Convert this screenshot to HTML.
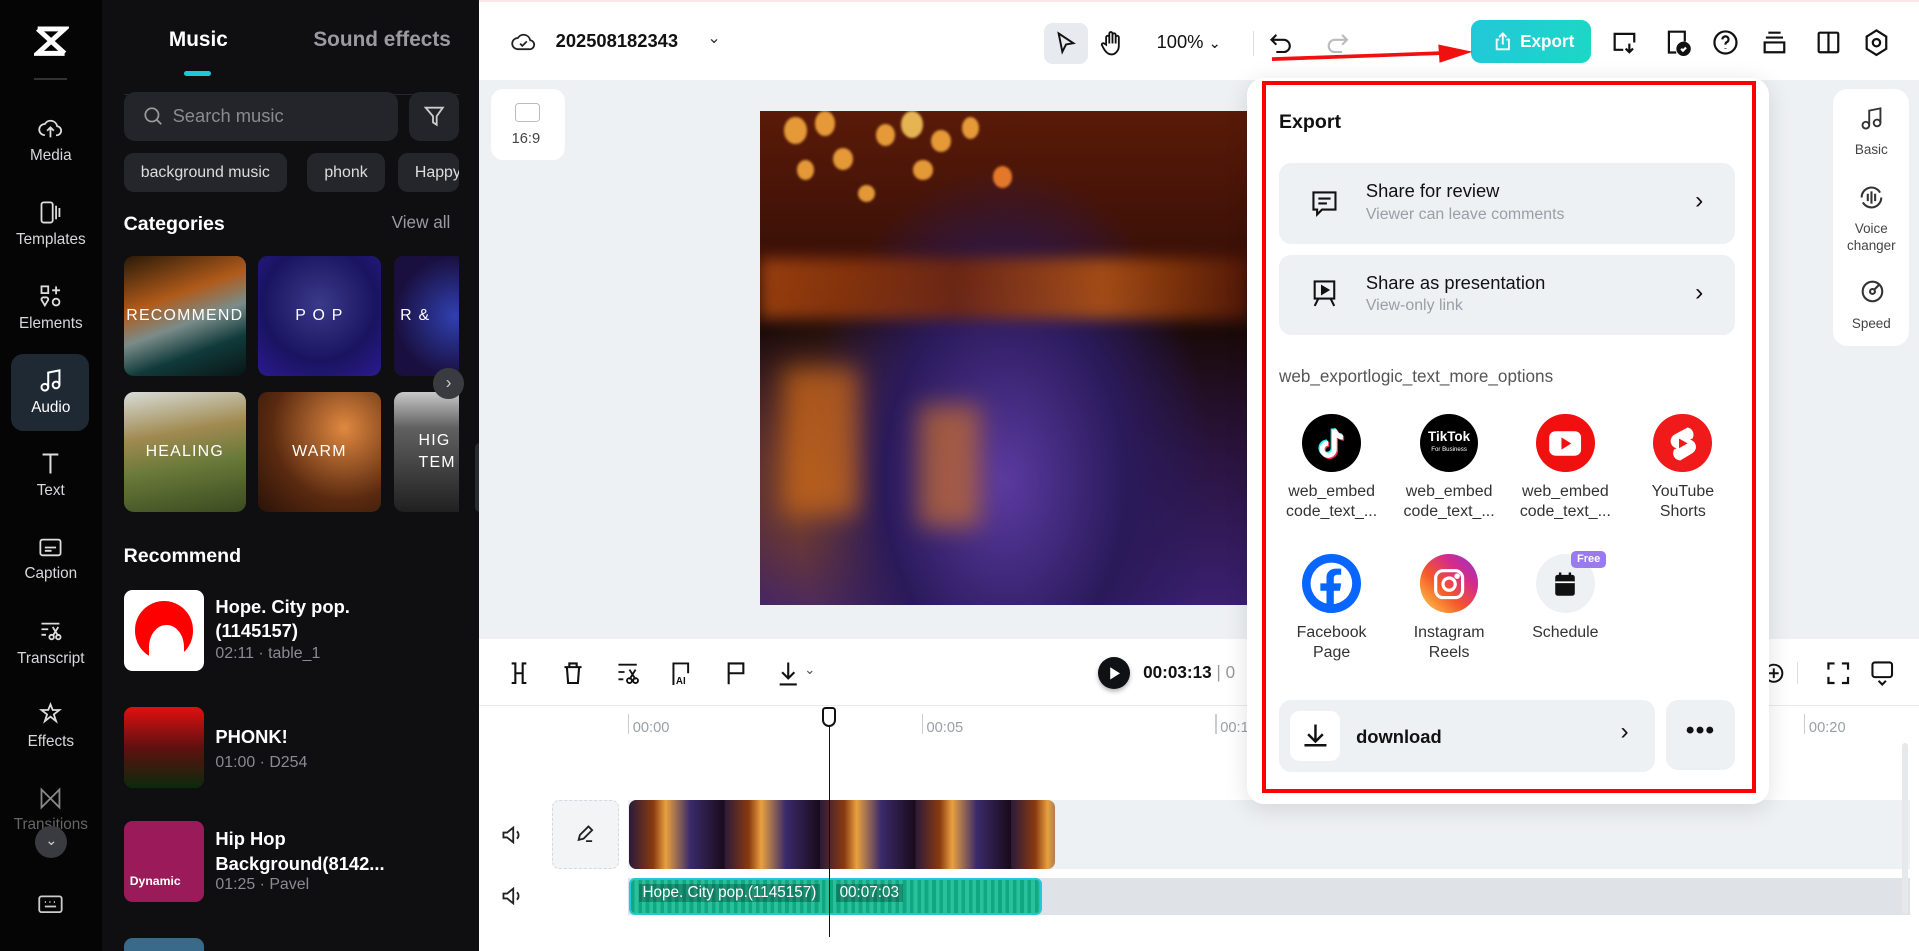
<!DOCTYPE html>
<html><head><meta charset="utf-8"><style>
*{box-sizing:border-box;margin:0;padding:0}
html,body{width:1919px;height:951px;overflow:hidden;background:#fff}
#w{zoom:1.2239;width:1568px;height:777px;position:relative;font-family:"Liberation Sans",sans-serif;overflow:hidden}
.a{position:absolute}
.rail{left:0;top:0;width:83px;height:777px;background:#050505;overflow:hidden}
.ri{position:absolute;left:0;width:83px;text-align:center;color:#d8d8dc;font-size:12.5px}
.ri svg{display:block;margin:0 auto 4px}
.panel{left:83px;top:0;width:308px;height:777px;background:#0f0f12;color:#fff;overflow:hidden}
.chip{position:absolute;top:125px;height:32px;border-radius:8px;background:#25262b;color:#ddd;font-size:13px;line-height:32px;padding:0 14px}
.cat{position:absolute;width:100px;height:98px;border-radius:8px;color:#fff;font-size:13px;display:flex;align-items:center;justify-content:center;letter-spacing:1px;overflow:hidden}
.song{position:absolute;left:18px;width:285px;height:70px}
.song .th{position:absolute;left:0;top:0;width:66px;height:66px;border-radius:7px}
.song .t{position:absolute;left:75px;font-size:15px;font-weight:bold;color:#fff;line-height:20px;width:205px;white-space:nowrap}
.song .s{position:absolute;left:75px;font-size:13px;color:#8a8a90;white-space:nowrap}
.top{left:391px;top:0;width:1177px;height:65px;background:#fff;border-top:2px solid #fbe6ea}
.canvas{left:391px;top:65px;width:1177px;height:457px;background:#eef1f4}
.tl{left:391px;top:522px;width:1177px;height:255px;background:#fff;overflow:hidden}
.pop{left:1019px;top:64px;width:426px;height:593px;background:#fff;border-radius:14px;box-shadow:0 4px 20px rgba(0,0,0,.12)}
.red{left:1031px;top:66px;width:404px;height:582px;border:4px solid #f00}
.card{position:absolute;left:1045px;width:373px;height:66px;background:#eef1f4;border-radius:10px}
.card .t{position:absolute;left:71px;top:14px;font-size:15px;color:#111}
.card .s{position:absolute;left:71px;top:35px;font-size:13px;color:#9a9ea6}
.soc{position:absolute;width:80px;text-align:center;font-size:13px;color:#333;line-height:16px}
.soc .c{width:48px;height:48px;border-radius:50%;margin:0 auto 8px;display:flex;align-items:center;justify-content:center}
.ic{position:absolute}
.bk{position:absolute;border-radius:50%;background:#ffb040;opacity:.85;filter:blur(1px)}
</style></head><body><div id="w">

<div class="a rail">
  <svg class="a" style="left:28px;top:20px" width="28" height="28" viewBox="0 0 28 28" fill="none" stroke="#fff" stroke-width="4"><path d="M3 4h22L3 24h22"/><path d="M3 4l22 20"/></svg>
  <div class="a" style="left:28px;top:64px;width:27px;height:1px;background:#333"></div>
  <div class="ri" style="top:94px"><svg width="22" height="22" viewBox="0 0 24 24" fill="none" stroke="#ddd" stroke-width="1.6"><path d="M7 18a5 5 0 0 1 0-10 6 6 0 0 1 11 2 4 4 0 0 1-1 8M12 20v-8M9 14l3-3 3 3"/></svg>Media</div>
  <div class="ri" style="top:163px"><svg width="22" height="22" viewBox="0 0 24 24" fill="none" stroke="#ddd" stroke-width="1.6"><rect x="4" y="3" width="10" height="18" rx="2"/><path d="M17 6v12M20 8v8"/></svg>Templates</div>
  <div class="ri" style="top:231px"><svg width="22" height="22" viewBox="0 0 24 24" fill="none" stroke="#ddd" stroke-width="1.6"><rect x="4" y="3" width="6" height="6"/><path d="M17 3v7M13.5 6.5h7"/><circle cx="17" cy="17" r="3"/><path d="M4 15l3 5 3-5a2 2 0 0 0-3-2 2 2 0 0 0-3 2z"/></svg>Elements</div>
  <div class="a" style="left:9px;top:289px;width:64px;height:63px;border-radius:10px;background:#1f2933"></div>
  <div class="ri" style="top:300px;color:#fff"><svg width="22" height="22" viewBox="0 0 24 24" fill="none" stroke="#fff" stroke-width="1.8"><circle cx="7" cy="18" r="3"/><circle cx="17" cy="16" r="3"/><path d="M10 18V5l10-2v13"/></svg>Audio</div>
  <div class="ri" style="top:368px"><svg width="22" height="22" viewBox="0 0 24 24" fill="none" stroke="#ddd" stroke-width="1.8"><path d="M5 4h14M12 4v17"/></svg>Text</div>
  <div class="ri" style="top:436px"><svg width="22" height="22" viewBox="0 0 24 24" fill="none" stroke="#ddd" stroke-width="1.6"><rect x="3" y="5" width="18" height="14" rx="2"/><path d="M7 12h10M7 15h6"/></svg>Caption</div>
  <div class="ri" style="top:505px"><svg width="22" height="22" viewBox="0 0 24 24" fill="none" stroke="#ddd" stroke-width="1.6"><path d="M4 5h16M4 10h6M4 15h4"/><circle cx="13" cy="17" r="2"/><circle cx="19" cy="17" r="2"/><path d="M14 8l5 8M19 8l-5 8"/></svg>Transcript</div>
  <div class="ri" style="top:573px"><svg width="22" height="22" viewBox="0 0 24 24" fill="none" stroke="#ddd" stroke-width="1.6"><path d="M12 3l2 5 6 0-5 4 2 6-5-4-5 4 2-6-5-4h6z"/></svg>Effects</div>
  <div class="ri" style="top:641px;color:#666"><svg width="22" height="22" viewBox="0 0 24 24" fill="none" stroke="#888" stroke-width="1.6"><path d="M4 4v16l16-16v16z"/></svg>Transitions</div>
  <div class="a" style="left:29px;top:675px;width:26px;height:26px;border-radius:50%;background:#3a3b40;color:#ccc;font-size:12px;text-align:center;line-height:26px">&#8964;</div>
  <svg class="a" style="left:30px;top:729px" width="22" height="20" viewBox="0 0 24 20" fill="none" stroke="#ccc" stroke-width="1.6"><rect x="2" y="3" width="20" height="14" rx="2"/><path d="M7 8h1M11 8h1M15 8h1M7 12h10"/></svg>
</div>

<div class="a panel">
  <div class="a" style="left:55px;top:23px;font-size:17px;font-weight:bold">Music</div>
  <div class="a" style="left:173px;top:23px;font-size:17px;font-weight:bold;color:#9a9aa0">Sound effects</div>
  <div class="a" style="left:67px;top:58px;width:22px;height:4px;border-radius:2px;background:#1ec8d8"></div>
  <div class="a" style="left:18px;top:77px;width:274px;height:1px;background:#26272b"></div>
  <div class="a" style="left:18px;top:75px;width:224px;height:40px;border-radius:9px;background:#24252a"></div>
  <svg class="a" style="left:33px;top:86px" width="18" height="18" viewBox="0 0 20 20" fill="none" stroke="#999" stroke-width="1.6"><circle cx="9" cy="9" r="6"/><path d="M13.5 13.5l4 4"/></svg>
  <div class="a" style="left:58px;top:86px;font-size:15px;color:#8a8a90">Search music</div>
  <div class="a" style="left:251px;top:75px;width:41px;height:40px;border-radius:9px;background:#24252a"></div>
  <svg class="a" style="left:262px;top:85px" width="20" height="20" viewBox="0 0 20 20" fill="none" stroke="#ccc" stroke-width="1.5"><path d="M3 3h14l-5 7v7l-3-2v-5z"/></svg>
  <div class="chip" style="left:18px">background music</div>
  <div class="chip" style="left:168px">phonk</div>
  <div class="chip" style="left:242px;width:50px;overflow:hidden;padding:0 0 0 14px">Happy</div>
  <div class="a" style="left:18px;top:174px;font-size:16px;font-weight:bold">Categories</div>
  <div class="a" style="left:237px;top:173px;font-size:14px;color:#9a9aa0">View all</div>
  <div style="position:absolute;left:18px;top:209px;width:274px;height:215px;overflow:hidden">
    <div class="cat" style="left:0;top:0;background:linear-gradient(160deg,#2a1a08 0%,#b05a1a 35%,#7a8c8a 55%,#103a3a 75%,#0a1416)">RECOMMEND</div>
    <div class="cat" style="left:110px;top:0;background:radial-gradient(circle at 50% 40%,#3a3a8a,#1a1460 60%,#2a1a90)">P O P</div>
    <div class="cat" style="left:221px;top:0;background:radial-gradient(circle,#3040b0,#1a1040 70%);justify-content:flex-start;padding-left:5px">R &amp;</div>
    <div class="cat" style="left:0;top:111px;background:linear-gradient(170deg,#d8dcd8 0%,#a08a50 35%,#6a7a3a 60%,#3a4a20)">HEALING</div>
    <div class="cat" style="left:110px;top:111px;background:radial-gradient(circle at 70% 30%,#e08840,#5a2a10 60%,#2a1208)">WARM</div>
    <div class="cat" style="left:221px;top:111px;background:linear-gradient(180deg,#c8c8c8 0%,#606060 30%,#202020);justify-content:flex-start;padding-left:20px;line-height:18px">HIG<br>TEM</div>
  </div>
  <div class="a" style="left:271px;top:301px;width:25px;height:25px;border-radius:50%;background:#3a3b40;color:#ccc;text-align:center;line-height:24px;font-size:14px">›</div>
  <div class="a" style="left:18px;top:445px;font-size:16px;font-weight:bold">Recommend</div>
  <div class="song" style="top:482px"><div class="th" style="background:#fff;overflow:hidden"><div style="position:absolute;left:9px;top:9px;width:48px;height:48px;border-radius:50%;background:#f00"></div><div style="position:absolute;left:21px;top:29px;width:28px;height:36px;border-radius:50% 50% 0 0;background:#fff"></div></div><div class="t" style="top:4px">Hope. City pop.<br>(1145157)</div><div class="s" style="top:45px">02:11 · table_1</div></div>
  <div class="song" style="top:578px"><div class="th" style="background:linear-gradient(180deg,#e01010,#601010 50%,#0a2a0a)"></div><div class="t" style="top:14px">PHONK!</div><div class="s" style="top:38px">01:00 · D254</div></div>
  <div class="song" style="top:671px"><div class="th" style="background:#9a1a5a"><span style="position:absolute;left:5px;top:43px;font-size:10px;font-weight:bold">Dynamic</span></div><div class="t" style="top:5px">Hip Hop<br>Background(8142...</div><div class="s" style="top:45px">01:25 · Pavel</div></div>
  <div class="song" style="top:766px"><div class="th" style="background:#3a6a8a"></div></div>
</div>
<div class="a" style="left:388px;top:362px;width:10px;height:56px;border-radius:4px;background:#2a2b30"></div>

<div class="a top">
  <svg class="ic" style="left:26px;top:22px" width="22" height="22" viewBox="0 0 24 24" fill="none" stroke="#222" stroke-width="1.6"><path d="M7 18a5 5 0 0 1 0-10 6 6 0 0 1 11 2 4 4 0 0 1-1 8z"/><path d="M9 13l2 2 4-4"/></svg>
  <div class="a" style="left:63px;top:23px;font-size:15px;font-weight:bold;color:#111">202508182343</div>
  <div class="a" style="left:187px;top:21px;font-size:13px;color:#333">&#8964;</div>
  <div class="a" style="left:462px;top:17px;width:36px;height:34px;border-radius:7px;background:#e7eaee"></div>
  <svg class="ic" style="left:471px;top:24px" width="18" height="20" viewBox="0 0 18 20" fill="none" stroke="#111" stroke-width="1.6"><path d="M3 2l12 8-6 1-3 6z"/></svg>
  <svg class="ic" style="left:508px;top:23px" width="20" height="22" viewBox="0 0 20 22" fill="none" stroke="#111" stroke-width="1.5"><path d="M5 12V6a1.3 1.3 0 0 1 2.6 0v5V3a1.3 1.3 0 0 1 2.6 0v8V4a1.3 1.3 0 0 1 2.6 0v7V6a1.3 1.3 0 0 1 2.6 0v7c0 4-3 7-6 7s-5-2-7-6l-1-2a1.3 1.3 0 0 1 2-1z"/></svg>
  <div class="a" style="left:554px;top:24px;font-size:15px;color:#111">100% <span style="font-size:12px">&#8964;</span></div>
  <div class="a" style="left:633px;top:24px;width:1px;height:20px;background:#ddd"></div>
  <svg class="ic" style="left:646px;top:23px" width="20" height="20" viewBox="0 0 20 20" fill="none" stroke="#111" stroke-width="1.7"><path d="M6 4L2 8l4 4M2 8h10a5 5 0 0 1 0 10H6"/></svg>
  <svg class="ic" style="left:692px;top:23px" width="20" height="20" viewBox="0 0 20 20" fill="none" stroke="#bbb" stroke-width="1.7"><path d="M14 4l4 4-4 4M18 8H8a5 5 0 0 0 0 10h6"/></svg>
  <div class="a" style="left:811px;top:15px;width:98px;height:35px;border-radius:8px;background:linear-gradient(90deg,#22c8d8,#1ed6c6);color:#fff;font-size:14px;font-weight:bold;line-height:35px;padding-left:40px">Export</div>
  <svg class="ic" style="left:829px;top:24px" width="16" height="17" viewBox="0 0 16 17" fill="none" stroke="#fff" stroke-width="1.5"><path d="M5 7H3v8h10V7h-2M8 11V2M5 5l3-3 3 3"/></svg>
  <svg class="ic" style="left:925px;top:22px" width="22" height="22" viewBox="0 0 22 22" fill="none" stroke="#111" stroke-width="1.8"><path d="M10 17H3V4h16v7M15 12v7M12 16l3 3 3-3"/></svg>
  <svg class="ic" style="left:969px;top:21px" width="22" height="24" viewBox="0 0 22 24" fill="none" stroke="#111" stroke-width="1.8"><path d="M10 20H4V3h13v8"/><circle cx="16" cy="17" r="5" fill="#111"/><path d="M14 17l1.5 1.5L18 16" stroke="#fff"/></svg>
  <svg class="ic" style="left:1008px;top:22px" width="22" height="22" viewBox="0 0 22 22" fill="none" stroke="#111" stroke-width="1.8"><circle cx="11" cy="11" r="9"/><path d="M8.5 8.5a2.5 2.5 0 1 1 3.5 2.3c-.8.4-1 1-1 2M11 15.5v.5"/></svg>
  <svg class="ic" style="left:1048px;top:22px" width="22" height="22" viewBox="0 0 22 22" fill="none" stroke="#111" stroke-width="1.8"><path d="M6 3h10M4 7h14M3 11h16v8H3z"/></svg>
  <svg class="ic" style="left:1092px;top:22px" width="22" height="22" viewBox="0 0 22 22" fill="none" stroke="#111" stroke-width="1.8"><rect x="3" y="3" width="16" height="16" rx="1"/><path d="M11 3v16"/></svg>
  <svg class="ic" style="left:1131px;top:21px" width="22" height="24" viewBox="0 0 22 24" fill="none" stroke="#111" stroke-width="1.8"><path d="M11 2l8 5v10l-8 5-8-5V7z"/><circle cx="11" cy="12" r="3"/></svg>
</div>
<svg class="a" style="left:1035px;top:34px" width="170" height="20" viewBox="0 0 170 20"><path d="M4 14L145 9" stroke="#f01010" stroke-width="3"/><path d="M140 2l28 6-27 9z" fill="#f01010"/></svg>

<div class="a canvas">
  <div class="a" style="left:10px;top:8px;width:61px;height:58px;border-radius:10px;background:#fff"></div>
  <div class="a" style="left:30px;top:19px;width:20px;height:16px;border:1.5px solid #bbb;border-radius:3px"></div>
  <div class="a" style="left:27px;top:42px;font-size:12px;color:#444">16:9</div>
  <div class="a" style="left:230px;top:26px;width:400px;height:403px;overflow:hidden;background:radial-gradient(ellipse at 50% 75%,#5a3aa0 0%,#2a1a5a 35%,transparent 60%),radial-gradient(circle at 15% 75%,#8a4a20,transparent 30%),linear-gradient(180deg,#5a1a08 0%,#3a1008 30%,#1a0a0a 45%,#2a1440 70%,#3a2070)">
    <div class="bk" style="left:20px;top:5px;width:18px;height:22px"></div>
    <div class="bk" style="left:45px;top:0;width:16px;height:20px"></div>
    <div class="bk" style="left:30px;top:40px;width:14px;height:16px"></div>
    <div class="bk" style="left:60px;top:30px;width:16px;height:18px"></div>
    <div class="bk" style="left:95px;top:10px;width:15px;height:18px"></div>
    <div class="bk" style="left:115px;top:0;width:18px;height:22px;background:#ffd060"></div>
    <div class="bk" style="left:140px;top:15px;width:16px;height:18px"></div>
    <div class="bk" style="left:125px;top:40px;width:16px;height:16px"></div>
    <div class="bk" style="left:165px;top:5px;width:14px;height:18px"></div>
    <div class="bk" style="left:190px;top:45px;width:16px;height:18px;background:#ff8a30"></div>
    <div class="bk" style="left:80px;top:60px;width:14px;height:14px"></div>
    <div class="a" style="left:0;top:120px;width:400px;height:50px;background:linear-gradient(90deg,#b04a10,#7a2a08 40%,#c05a10 70%,#5a1a08);filter:blur(6px);opacity:.8"></div>
    <div class="a" style="left:20px;top:210px;width:60px;height:120px;background:#d06a18;filter:blur(10px);opacity:.7"></div>
    <div class="a" style="left:130px;top:240px;width:50px;height:100px;background:#e07a20;filter:blur(10px);opacity:.6"></div>
  </div>
  <div class="a" style="left:1107px;top:8px;width:62px;height:210px;border-radius:12px;background:#fff"></div>
  <svg class="ic" style="left:1127px;top:21px" width="22" height="22" viewBox="0 0 24 24" fill="none" stroke="#333" stroke-width="1.7"><circle cx="7" cy="18" r="3"/><circle cx="17" cy="16" r="3"/><path d="M10 18V5l10-2v13"/></svg>
  <div class="a" style="left:1107px;top:51px;width:62px;text-align:center;font-size:11px;color:#444">Basic</div>
  <svg class="ic" style="left:1127px;top:85px" width="22" height="22" viewBox="0 0 22 22" fill="none" stroke="#333" stroke-width="1.7"><path d="M3 11a8 8 0 0 1 15-4M19 11a8 8 0 0 1-15 4M8 8v6M11 6v10M14 8v6"/></svg>
  <div class="a" style="left:1107px;top:115px;width:62px;text-align:center;font-size:11px;color:#444;line-height:14px">Voice<br>changer</div>
  <svg class="ic" style="left:1128px;top:162px" width="22" height="22" viewBox="0 0 22 22" fill="none" stroke="#333" stroke-width="1.7"><circle cx="11" cy="11" r="8"/><circle cx="11" cy="11" r="2"/><path d="M12.5 9.5l4-4"/></svg>
  <div class="a" style="left:1107px;top:193px;width:62px;text-align:center;font-size:11px;color:#444">Speed</div>
</div>

<div class="a tl">
  <svg class="ic" style="left:24px;top:18px" width="18" height="20" viewBox="0 0 18 20" fill="none" stroke="#111" stroke-width="1.7"><path d="M3 2h3v16H3M15 2h-3v16h3M6 10h6"/></svg>
  <svg class="ic" style="left:68px;top:18px" width="18" height="20" viewBox="0 0 18 20" fill="none" stroke="#111" stroke-width="1.7"><path d="M2 5h14M6 5V2h6v3M4 5l1 13h8l1-13"/></svg>
  <svg class="ic" style="left:112px;top:18px" width="20" height="20" viewBox="0 0 20 20" fill="none" stroke="#111" stroke-width="1.5"><path d="M2 3h15M2 9h5M2 15h4"/><circle cx="11" cy="16" r="2"/><circle cx="16" cy="16" r="2"/><path d="M11 7l5 8M16 7l-5 8"/></svg>
  <svg class="ic" style="left:157px;top:18px" width="16" height="20" viewBox="0 0 16 20" fill="none" stroke="#111" stroke-width="1.6"><path d="M2 20V2h12v8"/><text x="4" y="19" font-size="8" font-family="Liberation Sans" font-weight="bold" fill="#111" stroke="none">AI</text></svg>
  <svg class="ic" style="left:201px;top:18px" width="18" height="20" viewBox="0 0 18 20" fill="none" stroke="#111" stroke-width="1.7"><path d="M3 19V2h12v8H3"/></svg>
  <svg class="ic" style="left:243px;top:17px" width="20" height="22" viewBox="0 0 20 22" fill="none" stroke="#111" stroke-width="1.7"><path d="M10 2v13M5 10l5 5 5-5M3 20h14"/></svg>
  <div class="a" style="left:266px;top:19px;font-size:11px;color:#555">&#8964;</div>
  <div class="a" style="left:506px;top:15px;width:26px;height:26px;border-radius:50%;background:#0f1115;box-shadow:0 2px 4px rgba(0,0,0,.3)"></div>
  <svg class="ic" style="left:515px;top:22px" width="10" height="12" viewBox="0 0 10 12"><path d="M1 1l8 5-8 5z" fill="#fff"/></svg>
  <div class="a" style="left:543px;top:19px;font-size:14px;font-weight:bold;color:#111">00:03:13 <span style="font-weight:normal;color:#999">| 0</span></div>
  <svg class="ic" style="left:1050px;top:18px" width="18" height="20" viewBox="0 0 18 20" fill="none" stroke="#111" stroke-width="1.6"><circle cx="8" cy="10" r="7"/><path d="M8 6v8M4 10h8"/></svg>
  <div class="a" style="left:1077px;top:19px;width:1px;height:18px;background:#ddd"></div>
  <svg class="ic" style="left:1101px;top:18px" width="20" height="20" viewBox="0 0 20 20" fill="none" stroke="#111" stroke-width="1.8"><path d="M2 7V2h5M13 2h5v5M18 13v5h-5M7 18H2v-5"/></svg>
  <svg class="ic" style="left:1137px;top:17px" width="20" height="22" viewBox="0 0 20 22" fill="none" stroke="#111" stroke-width="1.7"><rect x="2" y="2" width="16" height="12" rx="2"/><path d="M7 17l3 3 3-3"/></svg>
  <div class="a" style="left:0;top:54px;width:1177px;height:1px;background:#e8eaed"></div>
  <div class="a" style="left:122px;top:61px;width:1px;height:17px;background:#ccc"></div>
  <div class="a" style="left:126px;top:66px;font-size:12px;color:#9aa0a8">00:00</div>
  <div class="a" style="left:362px;top:61px;width:1px;height:17px;background:#ccc"></div>
  <div class="a" style="left:366px;top:66px;font-size:12px;color:#9aa0a8">00:05</div>
  <div class="a" style="left:602px;top:61px;width:1px;height:17px;background:#ccc"></div>
  <div class="a" style="left:606px;top:66px;font-size:12px;color:#9aa0a8">00:1</div>
  <div class="a" style="left:1083px;top:61px;width:1px;height:17px;background:#ccc"></div>
  <div class="a" style="left:1087px;top:66px;font-size:12px;color:#9aa0a8">00:20</div>
  <div class="a" style="left:122px;top:132px;width:1048px;height:56px;background:#eef1f4"></div>
  <div class="a" style="left:122px;top:195px;width:1048px;height:31px;background:#dfe3e8"></div>
  <svg class="ic" style="left:18px;top:151px" width="18" height="18" viewBox="0 0 18 18" fill="none" stroke="#222" stroke-width="1.5"><path d="M2 7h3l5-4v12l-5-4H2zM13 6a4 4 0 0 1 0 6"/></svg>
  <svg class="ic" style="left:18px;top:201px" width="18" height="18" viewBox="0 0 18 18" fill="none" stroke="#222" stroke-width="1.5"><path d="M2 7h3l5-4v12l-5-4H2zM13 6a4 4 0 0 1 0 6"/></svg>
  <div class="a" style="left:60px;top:132px;width:55px;height:56px;border:1px dashed #d5d8dc;border-radius:6px;background:#f2f4f6"></div>
  <svg class="ic" style="left:79px;top:151px" width="16" height="16" viewBox="0 0 16 16" fill="none" stroke="#222" stroke-width="1.5"><path d="M3 13l1-4 7-7 3 3-7 7zM9 14h5"/></svg>
  <div class="a" style="left:123px;top:132px;width:348px;height:56px;border-radius:6px;background:repeating-linear-gradient(90deg,#2a1a3a 0,#8a3a10 20px,#e8a040 30px,#3a2a6a 50px,#1a0a1a 78px)"></div>
  <div class="a" style="left:123px;top:195px;width:337px;height:31px;border-radius:5px;background:repeating-linear-gradient(90deg,#10a882 0 3px,#2ac09a 3px 6px);border:2px solid #22c8d8"></div>
  <div class="a" style="left:131px;top:200px;font-size:12.5px;color:#fff;background:rgba(0,0,0,.25);padding:0 3px">Hope. City pop.(1145157)</div>
  <div class="a" style="left:292px;top:200px;font-size:12.5px;color:#fff;background:rgba(0,0,0,.25);padding:0 3px">00:07:03</div>
  <div class="a" style="left:286px;top:62px;width:1px;height:182px;background:#111"></div>
  <div class="a" style="left:281px;top:56px;width:11px;height:16px;border:2px solid #111;border-radius:3px 3px 6px 6px;background:#fff"></div>
  <div class="a" style="left:1163px;top:85px;width:5px;height:140px;border-radius:3px;background:#e6e8ea"></div>
</div>

<div class="a pop"></div>
<div class="a red"></div>
<div class="a" style="left:1045px;top:91px;font-size:16px;font-weight:bold;color:#111">Export</div>
<div class="card" style="top:133px"><svg class="ic" style="left:26px;top:22px" width="22" height="22" viewBox="0 0 22 22" fill="none" stroke="#111" stroke-width="1.7"><path d="M2 2h18v14H9l-4 4v-4H2z"/><path d="M6 7h10M6 11h7"/></svg><div class="t">Share for review</div><div class="s">Viewer can leave comments</div><div class="ic" style="left:340px;top:20px;font-size:20px;color:#111">›</div></div>
<div class="card" style="top:208px"><svg class="ic" style="left:26px;top:20px" width="22" height="24" viewBox="0 0 22 24" fill="none" stroke="#111" stroke-width="1.7"><rect x="3" y="2" width="16" height="14"/><path d="M9 6l5 3-5 3z" fill="#111"/><path d="M6 16l-3 6M16 16l3 6"/></svg><div class="t">Share as presentation</div><div class="s">View-only link</div><div class="ic" style="left:340px;top:20px;font-size:20px;color:#111">›</div></div>
<div class="a" style="left:1045px;top:299px;font-size:14px;color:#555">web_exportlogic_text_more_options</div>
<div class="soc" style="left:1048px;top:338px"><div class="c" style="background:#000"><svg width="26" height="28" viewBox="0 0 26 28" fill="none" stroke-width="4"><path d="M15 3v16a5 5 0 1 1-5-5M15 3c1 4 4 6 7 6" stroke="#25f4ee" transform="translate(-1,-1)"/><path d="M15 3v16a5 5 0 1 1-5-5M15 3c1 4 4 6 7 6" stroke="#fe2c55" transform="translate(1,1)"/><path d="M15 3v16a5 5 0 1 1-5-5M15 3c1 4 4 6 7 6" stroke="#fff"/></svg></div>web_embed code_text_...</div>
<div class="soc" style="left:1144px;top:338px"><div class="c" style="background:#000;color:#fff;flex-direction:column;font-size:11px;font-weight:bold;line-height:11px">TikTok<span style="font-size:5px;font-weight:normal">For Business</span></div>web_embed code_text_...</div>
<div class="soc" style="left:1239px;top:338px"><div class="c" style="background:#f01010"><svg width="28" height="22" viewBox="0 0 28 22"><rect x="1" y="1" width="26" height="20" rx="5" fill="#fff"/><path d="M11 6l8 5-8 5z" fill="#f01010"/></svg></div>web_embed code_text_...</div>
<div class="soc" style="left:1335px;top:338px"><div class="c" style="background:#f01a1a"><svg width="24" height="30" viewBox="0 0 24 30"><path d="M16 2L5 8a6 6 0 0 0 2 11l-2 1a6 6 0 0 0 5 9l10-6a6 6 0 0 0-2-11l2-1A6 6 0 0 0 16 2z" fill="#fff"/><path d="M9 11l7 4-7 4z" fill="#f01a1a"/></svg></div>YouTube Shorts</div>
<div class="soc" style="left:1048px;top:453px"><div class="c" style="background:#0866ff"><svg width="48" height="48" viewBox="0 0 48 48"><circle cx="24" cy="24" r="17" fill="#fff"/><path d="M26 48V30h5l1-6h-6v-4c0-2 1-3 3-3h3v-5h-4c-5 0-8 3-8 7v5h-5v6h5v18z" fill="#0866ff"/></svg></div>Facebook Page</div>
<div class="soc" style="left:1144px;top:453px"><div class="c" style="background:linear-gradient(45deg,#fdd54a,#f5582a 40%,#d42b8c 70%,#8a3ad0)"><svg width="28" height="28" viewBox="0 0 28 28" fill="none" stroke="#fff" stroke-width="2.6"><rect x="3" y="3" width="22" height="22" rx="6"/><circle cx="14" cy="14" r="5"/><circle cx="20.5" cy="7.5" r="1" fill="#fff"/></svg></div>Instagram Reels</div>
<div class="soc" style="left:1239px;top:453px"><div class="c" style="background:#eef1f4"><svg width="18" height="22" viewBox="0 0 18 22"><rect x="1" y="4" width="16" height="17" rx="2" fill="#111"/><path d="M5 2v4M13 2v4" stroke="#111" stroke-width="2"/><path d="M1 10h16" stroke="#fff" stroke-width="1.5"/></svg></div>Schedule</div>
<div class="a" style="left:1284px;top:450px;width:28px;height:14px;border-radius:4px;background:#9a7af0;color:#fff;font-size:9px;font-weight:bold;text-align:center;line-height:14px">Free</div>
<div class="a" style="left:1045px;top:572px;width:307px;height:59px;border-radius:10px;background:#eef1f4"></div>
<div class="a" style="left:1054px;top:581px;width:41px;height:41px;border-radius:8px;background:#fff"></div>
<svg class="ic" style="left:1064px;top:590px" width="22" height="22" viewBox="0 0 22 22" fill="none" stroke="#111" stroke-width="2"><path d="M11 2v13M5 10l6 6 6-6M2 19h18"/></svg>
<div class="a" style="left:1108px;top:593px;font-size:15px;font-weight:bold;color:#111">download</div>
<div class="a" style="left:1324px;top:587px;font-size:20px;color:#111">›</div>
<div class="a" style="left:1361px;top:572px;width:57px;height:57px;border-radius:10px;background:#eef1f4;text-align:center;font-size:20px;font-weight:bold;line-height:50px;color:#111;letter-spacing:1px">•••</div>
</div></body></html>
